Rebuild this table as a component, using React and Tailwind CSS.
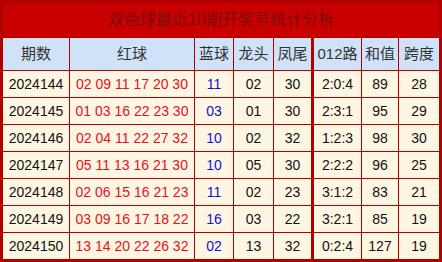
import React from 'react';

const rows = [
  ['2024144', '02 09 11 17 20 30', '11', '02', '30', '2:0:4', '89', '28'],
  ['2024145', '01 03 16 22 23 30', '03', '01', '30', '2:3:1', '95', '29'],
  ['2024146', '02 04 11 22 27 32', '10', '02', '32', '1:2:3', '98', '30'],
  ['2024147', '05 11 13 16 21 30', '10', '05', '30', '2:2:2', '96', '25'],
  ['2024148', '02 06 15 16 21 23', '11', '02', '23', '3:1:2', '83', '21'],
  ['2024149', '03 09 16 17 18 22', '16', '03', '22', '3:2:1', '85', '19'],
  ['2024150', '13 14 20 22 26 32', '02', '13', '32', '0:2:4', '127', '19'],
];

const heads = ['期数', '红球', '蓝球', '龙头', '凤尾', '012路', '和值', '跨度'];

const grid = 'grid grid-cols-[66px_125px_39px_40px_38px_50px_37px_41px]';

function cellClass(i) {
  if (i === 0) return '';
  if (i === 5) return 'border-l-[3px] border-[#b00000]';
  return 'border-l border-[#b00000]';
}

export default function App() {
  return (
    <div
      className="w-[442px] h-[262px] border-[3px] border-[#b00000] bg-[#fdf6e3] overflow-hidden"
      style={{ fontFamily: '"Liberation Sans", "Noto Sans CJK SC", sans-serif' }}
    >
      {/* Title */}
      <div className="h-[34px] bg-[#c80000] flex items-center justify-center text-[16px] text-[#800a0a]">
        双色球最近10期开奖号统计分析
      </div>

      {/* Header */}
      <div className={`${grid} h-[33px] border-t border-[#b00000] bg-[#cfe2f8]`}>
        {heads.map((h, i) => (
          <div key={h} className={`${cellClass(i)} flex items-center justify-center text-[15px] text-[#333]`}>
            {h}
          </div>
        ))}
      </div>

      {/* Rows */}
      {rows.map((r) => (
        <div key={r[0]} className={`${grid} h-[27px] border-t border-[#b00000]`}>
          {r.map((v, i) => (
            <div
              key={i}
              className={`${cellClass(i)} flex items-center justify-center text-[14px] ${
                i === 1 ? 'text-[#e8101c]' : i === 2 ? 'text-[#1010d0]' : 'text-[#111]'
              }`}
            >
              {v}
            </div>
          ))}
        </div>
      ))}
    </div>
  );
}
